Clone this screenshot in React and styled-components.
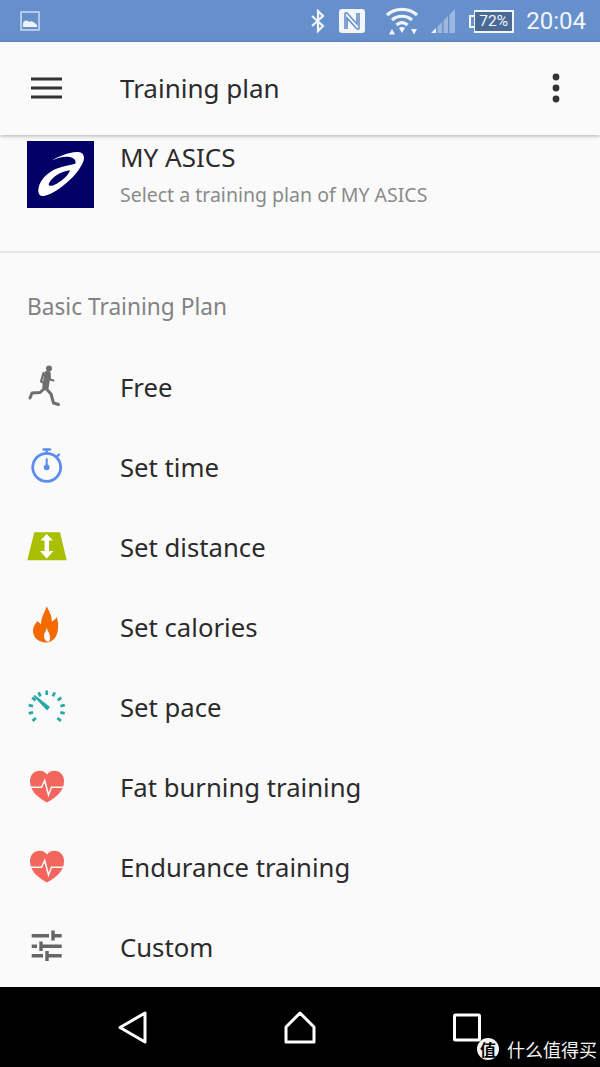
import React from 'react';
import styled, { createGlobalStyle } from 'styled-components';

const GlobalStyle = createGlobalStyle`
	html, body {
		margin: 0;
		padding: 0;
		background: #000;
	}
	body {
		font-family: "Noto Sans", "Open Sans", sans-serif;
	}
`;

const Screen = styled.div`
	width: 600px;
	height: 1067px;
	display: flex;
	flex-direction: column;
	overflow: hidden;
	background: #fafafa;
	position: relative;
`;

const StatusBar = styled.div`
	height: 42px;
	flex: none;
	display: flex;
	align-items: center;
	padding: 0 14px 0 20px;
	background: #6690cc;
	color: #f2f6fb;
`;

const StatusSpacer = styled.div`
	flex: 1;
`;

const StatusIcon = styled.svg`
	display: block;
	flex: none;
	margin-left: ${props => props.$gap || 0}px;
`;

const Battery = styled.div`
	width: 40px;
	height: 23px;
	margin-left: 19px;
	flex: none;
	box-sizing: border-box;
	border: 2px solid #f2f6fb;
	border-left-width: 1px;
	background: #4a6a98;
	color: #f2f6fb;
	font-family: "Roboto", sans-serif;
	font-size: 15.5px;
	line-height: 19px;
	text-align: center;
	position: relative;
	&::before {
		content: '';
		position: absolute;
		left: -6px;
		top: 3px;
		width: 5px;
		height: 13px;
		background: #6690cc;
		border: 2px solid #f2f6fb;
		border-right: none;
		box-sizing: border-box;
	}
`;

const Clock = styled.span`
	margin-left: 12px;
	font-family: "Roboto", sans-serif;
	font-size: 24px;
`;

const AppBar = styled.header`
	height: 93px;
	flex: none;
	box-sizing: border-box;
	padding-bottom: 1px;
	display: flex;
	align-items: center;
	background: #fafafa;
	box-shadow: 0 1px 4px rgba(0, 0, 0, 0.3);
	position: relative;
	z-index: 1;
`;

const MenuIcon = styled.svg`
	display: block;
	margin-left: 31px;
	flex: none;
`;

const AppTitle = styled.h1`
	margin: 0 0 0 58px;
	flex: 1;
	font-size: 26px;
	font-weight: 400;
	color: #2b2b2b;
`;

const MoreIcon = styled.svg`
	display: block;
	margin-right: 40px;
	flex: none;
`;

const Content = styled.main`
	flex: 1;
	min-height: 0;
	display: flex;
	flex-direction: column;
`;

const BrandRow = styled.section`
	height: 118px;
	flex: none;
	box-sizing: border-box;
	padding: 6px 0 0 27px;
	display: flex;
	align-items: flex-start;
	border-bottom: 2px solid #e4e4e4;
`;

const BrandLogo = styled.svg`
	display: block;
	flex: none;
`;

const BrandText = styled.div`
	margin-left: 26px;
	display: flex;
	flex-direction: column;
`;

const BrandName = styled.div`
	margin-top: -1px;
	font-size: 26px;
	line-height: 34px;
	color: #2b2b2b;
`;

const BrandNote = styled.div`
	margin-top: 4px;
	font-size: 19.5px;
	line-height: 34px;
	color: #8a8a8a;
`;

const SectionLabel = styled.div`
	padding: 36px 0 0 27px;
	height: 94px;
	box-sizing: border-box;
	font-size: 22.7px;
	line-height: 36px;
	color: #828282;
`;

const PlanList = styled.ul`
	list-style: none;
	margin: 0;
	padding: 0;
`;

const PlanRow = styled.li`
	height: 80px;
	display: flex;
	align-items: center;
	padding-left: 22px;
`;

const PlanIcon = styled.svg`
	display: block;
	width: 48px;
	height: 48px;
	flex: none;
`;

const PlanName = styled.span`
	margin-left: 50px;
	font-size: 25.7px;
	color: #2b2b2b;
`;

const NavBar = styled.nav`
	height: 80px;
	flex: none;
	background: #000;
	display: flex;
	align-items: center;
	justify-content: center;
	gap: 111px;
`;

const NavIcon = styled.svg`
	display: block;
	width: 56px;
	height: 56px;
	flex: none;
`;

const Watermark = styled.div`
	position: absolute;
	right: 3px;
	bottom: 5px;
	display: flex;
	align-items: center;
	color: #f4f4f4;
	font-family: "Noto Sans CJK SC", sans-serif;
	font-size: 18px;
`;

const WatermarkBadge = styled.span`
	width: 22px;
	height: 22px;
	margin-right: 8px;
	border-radius: 50%;
	background: #f4f4f4;
	color: #000;
	font-size: 16px;
	font-weight: 700;
	line-height: 22px;
	text-align: center;
`;

const RunnerIcon = () => (
	<PlanIcon viewBox="0 0 48 48">
		<circle cx="27" cy="5.6" r="3" fill="#6e6e6e" />
		<g fill="none" stroke="#6e6e6e" strokeLinecap="round" strokeLinejoin="round">
			<path d="M25.5 11 L23.5 24" strokeWidth="6.5" />
			<path d="M23 25 L18 29.5 L10 30 L8 35" strokeWidth="3" />
			<path d="M24.5 26 L29 31 L31.5 40 L36.5 41.5" strokeWidth="3" />
			<path d="M21.5 10 L19 18.5 L22 20" strokeWidth="2.2" />
			<path d="M27 10.5 L28 16.5 L31.5 17.5" strokeWidth="2.2" />
		</g>
	</PlanIcon>
);

const TimerIcon = () => (
	<PlanIcon viewBox="0 0 48 48">
		<g fill="none" stroke="#5b8def" strokeLinecap="round">
			<circle cx="24.7" cy="24.3" r="14" strokeWidth="2.8" />
			<path d="M21.5 6.5 H28" strokeWidth="2.4" />
			<path d="M24.7 7 V10" strokeWidth="2.4" />
			<path d="M35 13.5 L37 11.5" strokeWidth="2.4" />
			<path d="M24.7 16 V23" strokeWidth="2" />
		</g>
		<circle cx="24.7" cy="24.3" r="2.9" fill="#5b8def" />
	</PlanIcon>
);

const DistanceIcon = () => (
	<PlanIcon viewBox="0 0 48 48">
		<path d="M12.3 9.3 H38 L44.7 37.3 H5.3 Z" fill="#a8c000" />
		<path
			d="M24.7 11 L31 17.5 H27 V28 H31.5 L24.7 35.5 L18 28 H22.5 V17.5 H18.5 Z"
			fill="#fff"
		/>
	</PlanIcon>
);

const FlameIcon = () => (
	<PlanIcon viewBox="0 0 48 48">
		<path
			d="M24.8 3.3 C27 9 30 12 29.8 18.5 C31.5 17.5 33.5 16 34.8 14 C36.5 20 36.8 27 34.5 32 C32.5 37 28 39.8 23 39.5 C16 39 11 34 11 28 C11 23 14 20.5 15 18 C17 19.5 18 20 19 21.5 C19 14 23 9 24.8 3.3 Z"
			fill="#f26a00"
		/>
		<path
			d="M24.7 24 C24.5 28 21.5 30.5 22 34 C22.3 37 24.5 38.8 26.5 38.8 C28.5 38 28.5 33 27 30 C26 28 25 26.5 24.7 24 Z"
			fill="#fafafa"
		/>
	</PlanIcon>
);

const gaugeTicks = [-130, -104, -78, -52, -26, 0, 26, 52, 78, 104, 130];

const GaugeIcon = () => (
	<PlanIcon viewBox="0 0 48 48">
		<g stroke="#2aa8a8" strokeWidth="2.8">
			{gaugeTicks.map(angle => (
				<line
					key={angle}
					x1="24.7"
					y1="7.5"
					x2="24.7"
					y2="12"
					transform={`rotate(${angle} 24.7 26)`}
				/>
			))}
		</g>
		<path d="M11.6 13.2 L12.8 12 L28 24 L25 27.6 Z" fill="#2aa8a8" />
	</PlanIcon>
);

const HeartIcon = () => (
	<PlanIcon viewBox="0 0 48 48">
		<path
			d="M25 39.5 C17 35 8 29 8 18 C8 11.5 12.5 7.7 17.5 7.7 C21 7.7 23.5 9 25 11.5 C26.5 9 29 7.7 32.5 7.7 C37.5 7.7 42 11.5 42 18 C42 29 33 35 25 39.5 Z"
			fill="#f2665c"
		/>
		<path
			d="M7 24.3 H19.5 L22.7 17.5 L26.5 32 L29.5 24.3 H43"
			fill="none"
			stroke="#fafafa"
			strokeWidth="1.5"
		/>
	</PlanIcon>
);

const SlidersIcon = () => (
	<PlanIcon viewBox="0 0 48 48">
		<g fill="none" stroke="#666" strokeWidth="3.4">
			<path d="M9.7 12.7 H27 M31 12.7 H39.7" />
			<path d="M31 7.5 V17.5" />
			<path d="M9.7 23.3 H15 M19 23.3 H39.7" />
			<path d="M19 18.5 V28" />
			<path d="M9.7 32.7 H21 M25 32.7 H39.7" />
			<path d="M25 28 V38" />
		</g>
	</PlanIcon>
);

const plans = [
	{ name: 'Free', Icon: RunnerIcon },
	{ name: 'Set time', Icon: TimerIcon },
	{ name: 'Set distance', Icon: DistanceIcon },
	{ name: 'Set calories', Icon: FlameIcon },
	{ name: 'Set pace', Icon: GaugeIcon },
	{ name: 'Fat burning training', Icon: HeartIcon },
	{ name: 'Endurance training', Icon: HeartIcon },
	{ name: 'Custom', Icon: SlidersIcon }
];

const App = () => (
	<Screen>
		<GlobalStyle />
		<StatusBar>
			<StatusIcon width="20" height="20" viewBox="0 0 20 20">
				<rect x="1" y="1" width="18" height="18" fill="none" stroke="#c9d8ee" strokeWidth="1.6" />
				<path d="M3 16 V12 C5 9 7 9 9 11 C11 9 14 11 17 14 V16 Z" fill="#eef3fa" />
			</StatusIcon>
			<StatusSpacer />
			<StatusIcon width="16" height="24" viewBox="0 0 16 24">
				<path
					d="M2 7 L13 17 L8 22 V2 L13 7 L2 17"
					fill="none"
					stroke="#f2f6fb"
					strokeWidth="2.2"
				/>
			</StatusIcon>
			<StatusIcon width="26" height="24" viewBox="0 0 26 24" $gap={13}>
				<rect x="0" y="0" width="26" height="24" rx="3" fill="#f2f6fb" />
				<path
					d="M6 20 V5 C6 3.5 7.5 3.5 8.5 4.5 L18 15 V4 M20 4 V19 C20 20.5 18.5 20.5 17.5 19.5 L8 9 V20"
					fill="none"
					stroke="#6690cc"
					strokeWidth="1.6"
				/>
			</StatusIcon>
			<StatusIcon width="34" height="28" viewBox="0 0 34 28" $gap={20}>
				<g fill="none" stroke="#f2f6fb" strokeWidth="3.2">
					<path d="M2 8 C10 0.5 24 0.5 32 8" />
					<path d="M7 13 C12.5 8 21.5 8 27 13" />
					<path d="M11.5 18 C15 15 19 15 22.5 18" />
				</g>
				<path d="M14 21 C16 19.5 18 19.5 20 21 L17 26 Z" fill="#f2f6fb" />
				<path d="M4 27.5 L7 22 L10 27.5 Z M26 22 H32 L29 27.5 Z" fill="#f2f6fb" />
			</StatusIcon>
			<StatusIcon width="24" height="24" viewBox="0 0 24 24" $gap={12}>
				<path d="M0 24 L5 19 V24 Z" fill="#f2f6fb" />
				<path d="M6.5 24 V17.5 L11 13 V24 Z M12.5 24 V11.5 L17 7 V24 Z M18.5 24 V5.5 L24 0 V24 Z" fill="#9db8df" />
			</StatusIcon>
			<Battery>72%</Battery>
			<Clock>20:04</Clock>
		</StatusBar>
		<AppBar>
			<MenuIcon width="31" height="22" viewBox="0 0 31 22">
				<path d="M0 2 H31 M0 11 H31 M0 20 H31" stroke="#333" strokeWidth="3" />
			</MenuIcon>
			<AppTitle>Training plan</AppTitle>
			<MoreIcon width="8" height="30" viewBox="0 0 8 30">
				<circle cx="4" cy="4" r="3.4" fill="#333" />
				<circle cx="4" cy="15" r="3.4" fill="#333" />
				<circle cx="4" cy="26" r="3.4" fill="#333" />
			</MoreIcon>
		</AppBar>
		<Content>
			<BrandRow>
				<BrandLogo width="67" height="67" viewBox="0 0 67 67">
					<rect width="67" height="67" fill="#000066" />
					<path
						fillRule="evenodd"
						fill="#fff"
						d="M25 19.5 C31 15.5 41 11.5 50 11 C56 10.5 58 15 56.5 20 C53 30 42 41 31 48.5 C24 53 18 55.5 15 55 C10.5 54 10.5 48 13 42.5 C16 36 23 30 30 27.5 C36 25.3 43 24 48.3 22.8 C49.5 19.5 47 17 43 16 C37 15 31 16.5 25 19.5 Z M21.7 43 C24 37 33 30.5 43 29.3 C42 34 34 41 27 44 C24 45.5 21.5 45 21.7 43 Z"
					/>
				</BrandLogo>
				<BrandText>
					<BrandName>MY ASICS</BrandName>
					<BrandNote>Select a training plan of MY ASICS</BrandNote>
				</BrandText>
			</BrandRow>
			<SectionLabel>Basic Training Plan</SectionLabel>
			<PlanList>
				{plans.map(({ name, Icon }) => (
					<PlanRow key={name}>
						<Icon />
						<PlanName>{name}</PlanName>
					</PlanRow>
				))}
			</PlanList>
		</Content>
		<NavBar>
			<NavIcon viewBox="0 0 56 56">
				<path
					d="M40 14 V43 L15 28.5 Z"
					fill="none"
					stroke="#fff"
					strokeWidth="3"
					strokeLinejoin="round"
				/>
			</NavIcon>
			<NavIcon viewBox="0 0 56 56">
				<path
					d="M28 14 L42 28 V43 H14 V28 Z"
					fill="none"
					stroke="#fff"
					strokeWidth="3"
					strokeLinejoin="round"
				/>
			</NavIcon>
			<NavIcon viewBox="0 0 56 56">
				<rect
					x="15.5"
					y="16"
					width="25"
					height="25"
					rx="1"
					fill="none"
					stroke="#fff"
					strokeWidth="3"
				/>
			</NavIcon>
		</NavBar>
		<Watermark>
			<WatermarkBadge>值</WatermarkBadge>
			什么值得买
		</Watermark>
	</Screen>
);

export default App;
